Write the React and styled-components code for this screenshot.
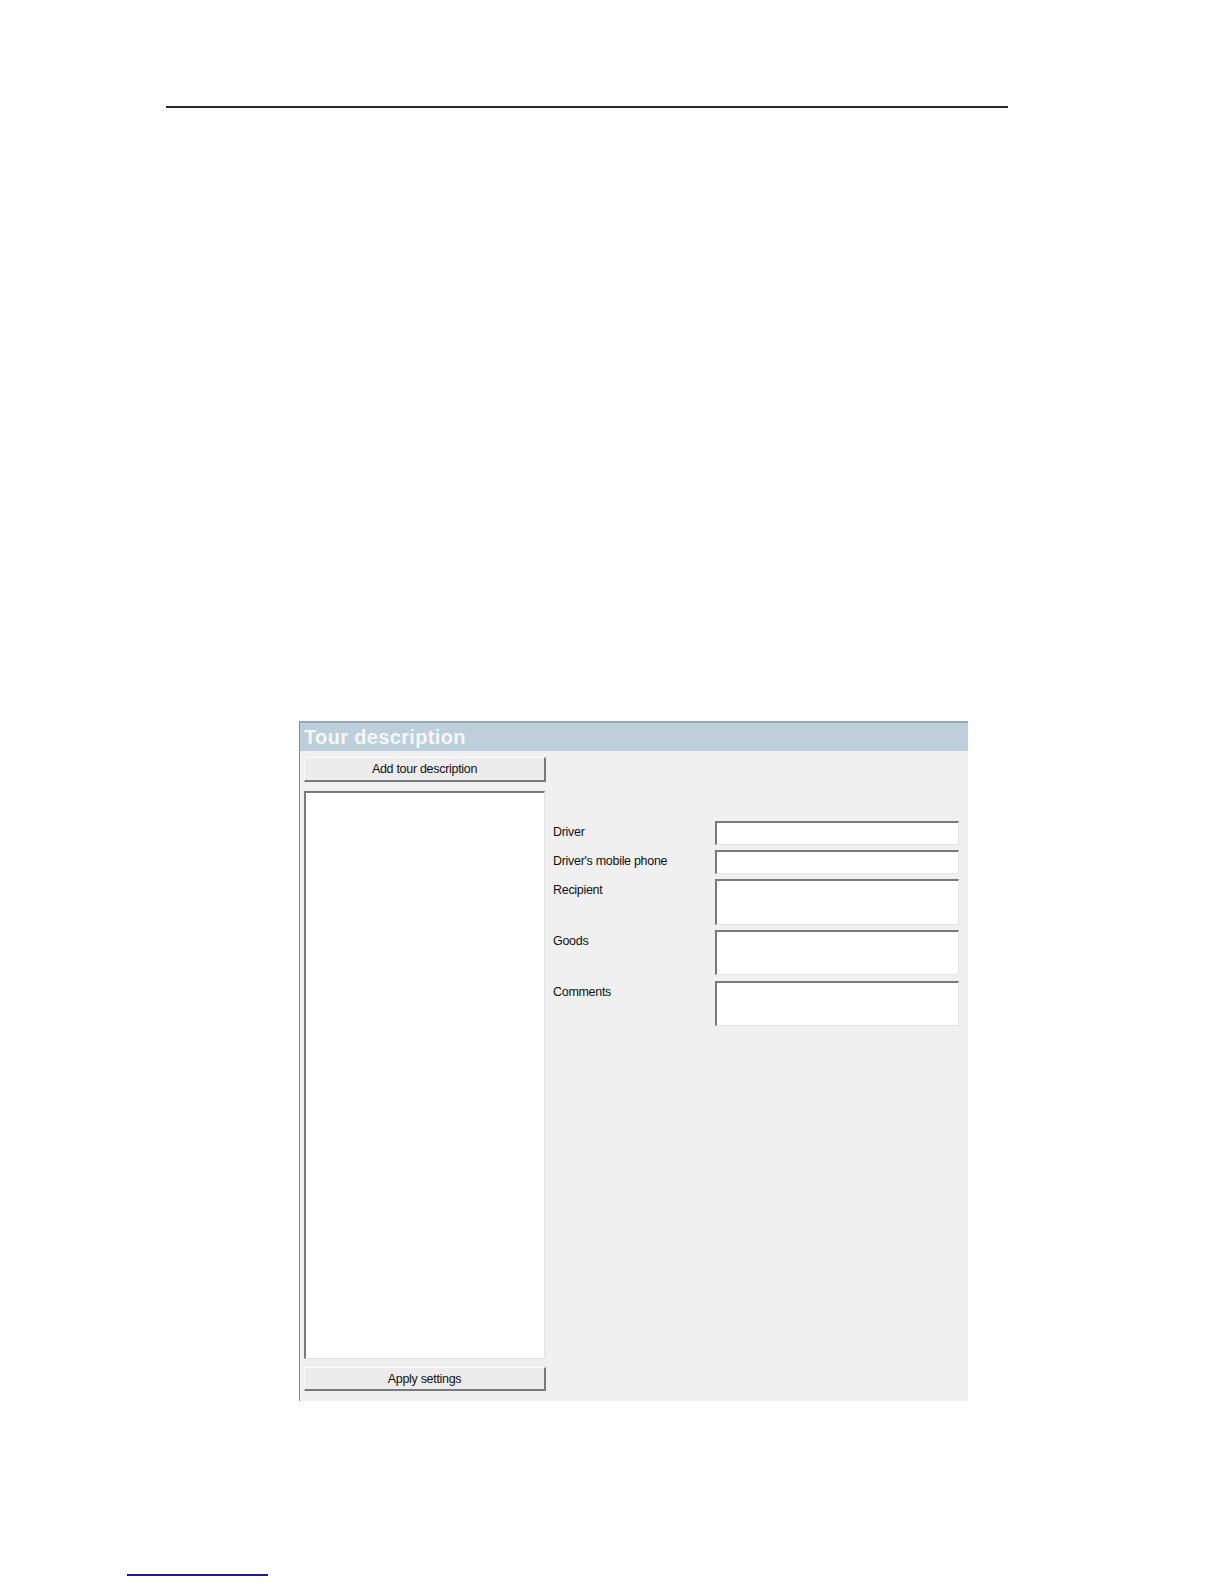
import { Fragment } from "react";
import styled, { createGlobalStyle } from "styled-components";

const GlobalStyle = createGlobalStyle`
  html, body {
    margin: 0;
    overflow: hidden;
  }
  body {
    background: #fff;
    font-family: "Liberation Sans", Arial, sans-serif;
  }
`;

const Page = styled.div`
  padding-top: 106px;
`;

const TopRule = styled.div`
  margin-left: 166px;
  width: 842px;
  height: 2px;
  background: #2a2a2a;
`;

const Panel = styled.div`
  margin: 613px 0 0 299px;
  width: 669px;
  height: 680px;
  background: #f0f0f0;
  border-left: 1px solid #8a8a8a;
  box-sizing: border-box;
  display: flex;
  flex-direction: column;
`;

const Header = styled.div`
  height: 30px;
  box-sizing: border-box;
  border-top: 2px solid #98a8b8;
  background: #bdcfdb;
  padding: 3px 0 0 4px;
  color: #f4f7fa;
  font-weight: bold;
  font-size: 20px;
  letter-spacing: 0.35px;
  line-height: 22px;
`;

const Body = styled.div`
  flex: 1;
  display: flex;
  gap: 7px;
  padding: 6px 0 10px 4px;
`;

const LeftCol = styled.div`
  width: 242px;
  display: flex;
  flex-direction: column;
`;

const Button = styled.button`
  height: ${(p) => p.$h}px;
  width: 242px;
  margin: 0;
  padding: 0;
  background: #ececec;
  border-style: solid;
  border-width: 1px 2px 2px 1px;
  border-color: #fbfbfb #7a7a7a #7a7a7a #fbfbfb;
  font-family: "Liberation Sans", Arial, sans-serif;
  font-size: 12.5px;
  letter-spacing: -0.3px;
  color: #111;
`;

const ListBox = styled.div`
  margin: ${(p) => p.$m};
  height: 568px;
  width: 241px;
  box-sizing: border-box;
  background: #fff;
  border-style: solid;
  border-width: 2px 1px 1px 2px;
  border-color: #7a7a7a #e4e4e4 #e4e4e4 #7a7a7a;
`;

const Form = styled.div`
  padding-top: 64px;
  display: grid;
  grid-template-columns: 162px 244px;
  row-gap: 5px;
  align-content: start;
`;

const Label = styled.div`
  padding-top: 4px;
  margin-top: ${(p) => p.$mt || 0}px;
  font-size: 12.5px;
  letter-spacing: -0.3px;
  color: #111;
`;

const Field = styled.div`
  height: ${(p) => p.$h}px;
  margin-top: ${(p) => p.$mt || 0}px;
  box-sizing: border-box;
  background: #fff;
  border-style: solid;
  border-width: 2px 1px 1px 2px;
  border-color: #7a7a7a #e6e6e6 #e6e6e6 #7a7a7a;
`;

const BottomRule = styled.div`
  margin: 173px 0 0 127px;
  width: 141px;
  height: 2px;
  background: #1c1c8e;
`;

const fields = [
  { label: "Driver", h: 24 },
  { label: "Driver's mobile phone", h: 24 },
  { label: "Recipient", h: 46 },
  { label: "Goods", h: 45 },
  { label: "Comments", h: 45, mt: 1 },
];

export default function App() {
  return (
    <>
      <GlobalStyle />
      <Page>
        <TopRule />
        <Panel>
          <Header>Tour description</Header>
          <Body>
            <LeftCol>
              <Button $h={25}>Add tour description</Button>
              <ListBox $m="9px 0 8px 0" />
              <Button $h={24}>Apply settings</Button>
            </LeftCol>
            <Form>
              {fields.map((f) => (
                <Fragment key={f.label}>
                  <Label $mt={f.mt}>{f.label}</Label>
                  <Field $h={f.h} $mt={f.mt} />
                </Fragment>
              ))}
            </Form>
          </Body>
        </Panel>
        <BottomRule />
      </Page>
    </>
  );
}
